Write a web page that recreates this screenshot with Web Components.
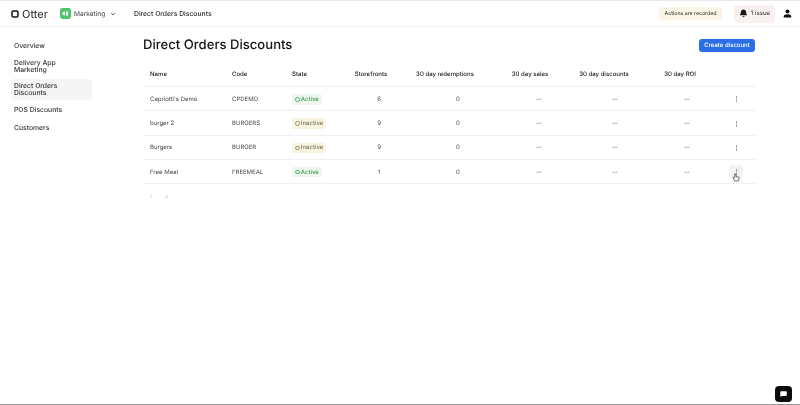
<!DOCTYPE html>
<html><head><meta charset="utf-8"><title>Direct Orders Discounts</title>
<style>
html,body{margin:0;height:405px;overflow:hidden;background:#fff;font-family:Inter,"Liberation Sans",sans-serif;color:#1c1c1c;text-rendering:geometricPrecision}
</style></head><body>
<app-shell></app-shell>
<script>
function def(name,css,html){
  customElements.define(name,class extends HTMLElement{
    connectedCallback(){
      if(this.shadowRoot)return;
      const r=this.attachShadow({mode:'open'});
      const h=typeof html==='function'?html(this):html;
      r.innerHTML='<style>'+css+'</style>'+h;
    }
  });
}
const attr=(e,n,d='')=>e.getAttribute(n)??d;

def('top-bar',`
:host{display:flex;align-items:center;height:27px;box-sizing:border-box;border-bottom:1px solid #eeeeee;border-top:1px solid #e8e8e8;padding:0 8px 0 11px}
.logo{display:flex;align-items:center;gap:3px;font-size:11px;font-weight:400;color:#1a1a1a;width:49px}
.tool{display:flex;align-items:center;gap:3px;font-size:6.600px;color:#3d3d3d;width:74px}
.crumb{font-size:6.800px;color:#2b2b2b;font-weight:450}
.sp{flex:1}
.rec{background:#fbf5e8;border-radius:3px;font-size:5.200px;width:63px;justify-content:center;height:13px;display:flex;align-items:center;color:#3a3a35;font-weight:500;margin-right:12px;white-space:nowrap}
.iss{background:#fbf0f0;border-radius:4px;height:18px;width:41px;display:flex;align-items:center;justify-content:center;gap:3px;font-size:6.100px;color:#2a2a2a;margin-right:8px}
svg{display:block}
`,`
<div class="logo"><svg width="8" height="8" viewBox="0 0 8 8"><rect x="1" y="1" width="6" height="6" rx="1.600" fill="none" stroke="#111" stroke-width="1.500"/></svg>Otter</div>
<div class="tool"><svg width="11" height="11" viewBox="0 0 11 11"><rect width="11" height="11" rx="2.400" fill="#4dc46b"/><path d="M2.500 4.200 5 3.400v4.200L2.500 6.800z M6 3.500h2.200v4H6z" fill="#fff"/></svg><span>Marketing</span><svg style="margin-left:2px" width="6" height="4" viewBox="0 0 6 4"><path d="M1 .8 3 3l2-2.200" fill="none" stroke="#444" stroke-width=".8"/></svg></div>
<div class="crumb">Direct Orders Discounts</div>
<div class="sp"></div>
<div class="rec">Actions are recorded</div>
<div class="iss"><svg width="9" height="9" viewBox="0 0 10 10"><path d="M5 .6c-2 0-3 1.500-3 3.400 0 1.600-.8 2.300-1.300 3h8.600C8.800 6.300 8 5.600 8 4c0-1.900-1-3.400-3-3.400z M3.800 8h2.400a1.200 1.200 0 0 1-2.400 0z" fill="#1a1a1a"/></svg>1 issue</div>
<svg width="9" height="9" viewBox="0 0 9 9"><circle cx="4.500" cy="2.500" r="2" fill="#111"/><path d="M.8 8.500V7.200C.8 6 2.500 5.300 4.500 5.300s3.700.7 3.700 1.900v1.300z" fill="#111"/></svg>
`);

def('nav-item',`
:host{display:block;font-size:6.800px;line-height:7.600px;color:#333;font-weight:500;padding:3px;border-radius:4px;width:75px}
:host([active]){background:#f5f5f5}
`,`<slot></slot>`);

def('side-nav',`
:host{display:flex;flex-direction:column;width:143px;box-sizing:border-box;padding:12px 0 0 11px;flex:none}
`,`<nav-item>Overview</nav-item>
<nav-item style="margin-top:3.300px">Delivery App Marketing</nav-item>
<nav-item active style="margin-top:1.600px;padding-bottom:3.500px">Direct Orders Discounts</nav-item>
<nav-item style="margin-top:2.500px">POS Discounts</nav-item>
<nav-item style="margin-top:4.400px">Customers</nav-item>`);

def('status-pill',`
:host{display:inline-flex;align-items:center;gap:1.200px;height:10.500px;padding:0 3px;border-radius:3px;font-size:6px;font-weight:500}
:host([state=Active]){background:#edf7ee;color:#3d9a55}
:host([state=Inactive]){background:#f8f4df;color:#7c7a60}
i{display:block;width:2.600px;height:2.600px;border:.6px solid currentColor;border-radius:50%;opacity:.8}
`,e=>`<i></i>${attr(e,'state')}`);

const COLS='82px 60px 62px 64px 94px 68px 84px 60px 38px';
def('table-head',`
:host{display:grid;grid-template-columns:${COLS};height:25px;align-items:center;border-bottom:1px solid #efefef;font-size:6.050px;font-weight:500;color:#222;box-sizing:border-box;white-space:nowrap}
.l{padding-left:7px}
.c{text-align:center}
`,`<div class="l">Name</div><div class="l">Code</div><div class="l">State</div>
<div class="c" style="padding-right:16px">Storefronts</div><div class="c" style="padding-right:26px">30 day redemptions</div>
<div class="c" style="padding-right:18px">30 day sales</div><div class="c" style="padding-right:22px">30 day discounts</div>
<div class="c" style="padding-right:14px">30 day ROI</div><div></div>`);

def('table-row',`
:host{display:grid;grid-template-columns:${COLS};height:24.300px;padding-top:1.300px;align-items:center;border-bottom:1px solid #f0f0f0;font-size:6px;color:#444;box-sizing:border-box;white-space:nowrap;position:relative}
.l{padding-left:7px}
.c{text-align:center}
.k{width:14px;height:14px;margin:auto;border-radius:3px;display:flex;align-items:center;justify-content:center}
:host([hover]) .k{background:#f3f3f3}
.cur{position:absolute;left:589px;top:13px}
`,e=>`<div class="l">${attr(e,'name')}</div><div class="l">${attr(e,'code')}</div><div class="l"><status-pill state="${attr(e,'state')}"></status-pill></div>
<div class="c">${attr(e,'sf')}</div><div class="c">0</div><div class="c">--</div><div class="c">--</div><div class="c">--</div>
<div class="k"><svg width="3" height="6" viewBox="0 0 3 6"><circle cx="1.500" cy=".9" r=".55" fill="#555"/><circle cx="1.500" cy="3" r=".55" fill="#555"/><circle cx="1.500" cy="5.100" r=".55" fill="#555"/></svg></div>
${e.hasAttribute('hover')?`<svg class="cur" width="8" height="9" viewBox="0 0 8 9"><path d="M2.700 1v3.800L1.700 4 1 4.700l1.800 3.300h3.400L7 6V4.200L4 3.600V1z" fill="#fff" stroke="#333" stroke-width=".7"/></svg>`:''}`);

def('discounts-page',`
:host{display:block;flex:none;width:612px;padding-top:9.500px}
.t{display:flex;align-items:center;justify-content:space-between;height:17px;margin-bottom:8.500px}
h1{margin:0;font-size:13.100px;font-weight:500;color:#141414}
button{border:0;background:#2b6fe6;color:#fff;font:500 6px Inter,sans-serif;text-rendering:geometricPrecision;height:13px;width:56px;border-radius:3px;padding:0}
.pg{display:flex;gap:10px;padding:10px 0 0 6px}
`,`<div class="t"><h1>Direct Orders Discounts</h1><button>Create discount</button></div>
<table-head></table-head>
<table-row name="Capriotti's Demo" code="CPDEMO" state="Active" sf="6"></table-row>
<table-row name="burger 2" code="BURGERS" state="Inactive" sf="9"></table-row>
<table-row name="Burgers" code="BURGER" state="Inactive" sf="9"></table-row>
<table-row name="Free Meal" code="FREEMEAL" state="Active" sf="1" hover></table-row>
<div class="pg"><svg width="5" height="5" viewBox="0 0 5 5"><path d="M3.200 .8 1.500 2.500l1.700 1.700" fill="none" stroke="#c4c4c4" stroke-width=".7"/></svg><svg width="5" height="5" viewBox="0 0 5 5"><path d="M1.800 .8l1.700 1.700-1.700 1.700" fill="none" stroke="#b0b0b0" stroke-width=".7"/></svg></div>`);

def('chat-fab',`
:host{position:absolute;right:8px;bottom:2px;width:17px;height:16px;background:#0c0c0c;border-radius:4px;display:flex;align-items:center;justify-content:center}
`,`<svg width="7" height="6" viewBox="0 0 7 6"><path d="M1 .3h5a.8.8 0 0 1 .8.800v3a.8.8 0 0 1-.8.8H2L.3 5.800V1.100A.8.8 0 0 1 1 .3z" fill="#fff"/></svg>`);

def('app-shell',`
:host{display:flex;flex-direction:column;height:405px;box-sizing:border-box;border-bottom:1px solid #9a9a9a;position:relative;will-change:transform}
.b{display:flex;flex:1}
`,`<top-bar></top-bar><div class="b"><side-nav></side-nav><discounts-page></discounts-page></div><chat-fab></chat-fab>`);
</script>
</body></html>
